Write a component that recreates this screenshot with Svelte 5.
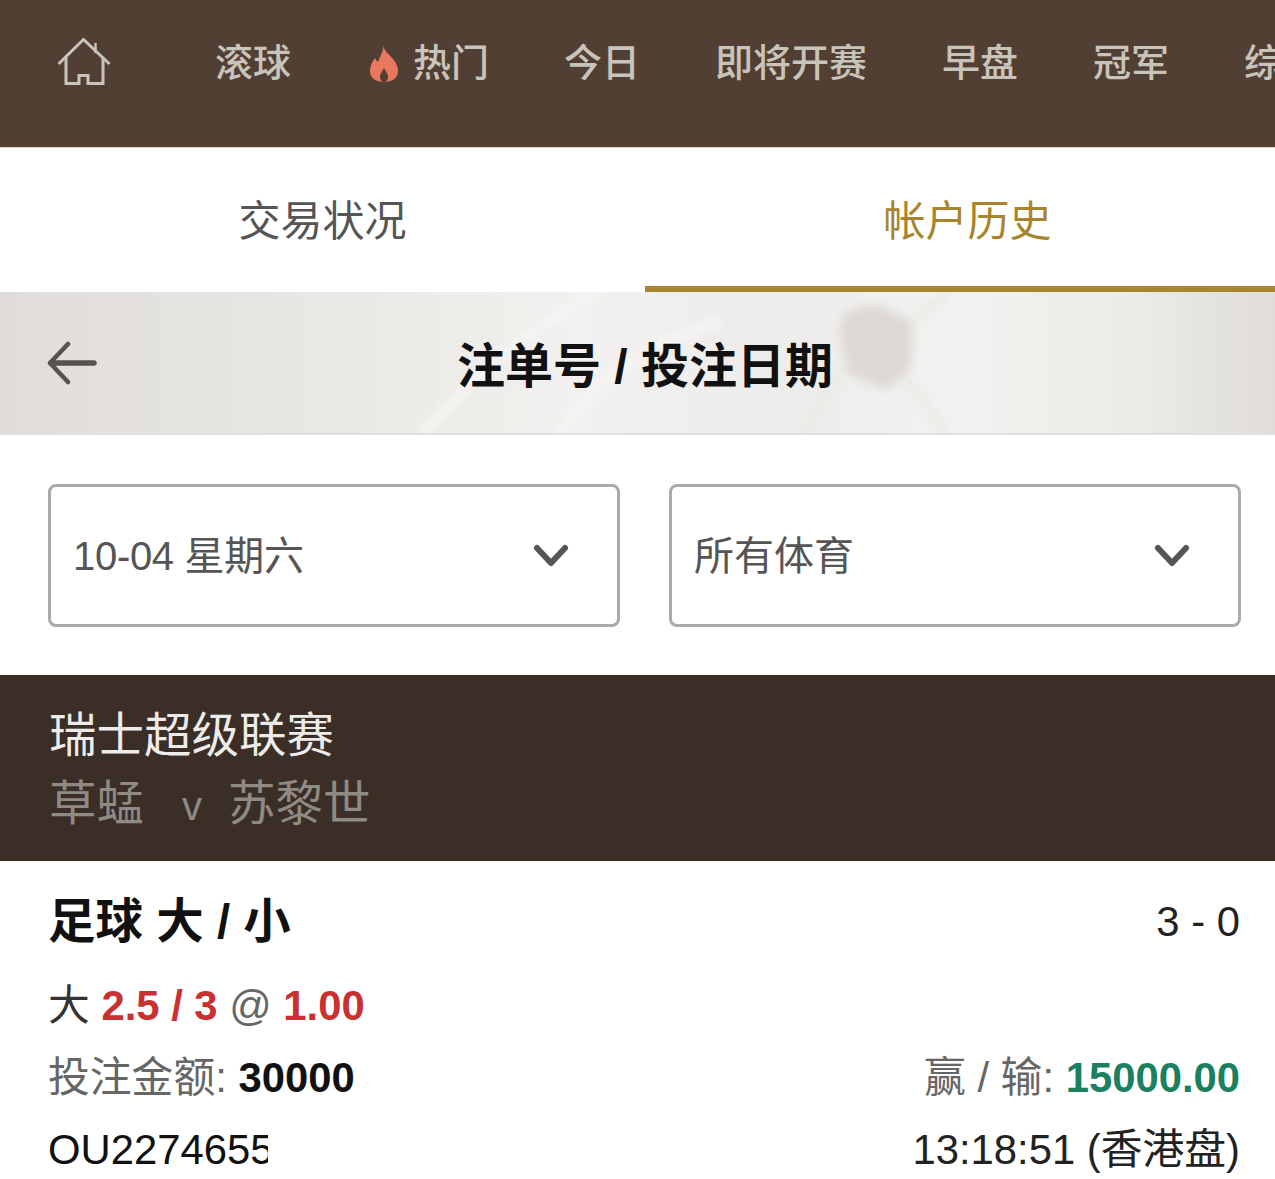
<script>
	const navItems = ['滚球', '热门', '今日', '即将开赛', '早盘', '冠军', '综合'];
</script>

<div class="page">
	<nav class="topnav">
		<svg class="home" viewBox="0 0 54 50" width="54" height="50" fill="none" stroke="#c9c4bb" stroke-width="3">
			<path d="M1.500 26 26.500 1.500 52.500 26" />
			<path d="M38.500 15V5" stroke-width="2.500" />
			<path d="M9 19v26.500h13v-8h9v8h15V19" />
		</svg>
		{#each navItems as item}
			<div class="nav-item">
				{#if item === '热门'}
					<svg class="flame" viewBox="0 0 30 37" width="30" height="37">
						<path fill="#e9785f" d="M14 0c1 6 6 9 10 14 3 4 5 7 5 12 0 7-6 11-14 11S1 33 1 26c0-5 2-9 5-13 1 2 2 3 3 4 2-6 6-11 5-17Z" />
						<path fill="#523f33" d="M15 23c1 3 4 5 4 9 0 3-2 5-4 5s-4-2-4-5c0-4 3-6 4-9Z" />
					</svg>
				{/if}
				{item}
			</div>
		{/each}
	</nav>

	<div class="tabs">
		<div class="tab">交易状况</div>
		<div class="tab active">帐户历史</div>
	</div>

	<header class="banner">
		<svg class="ball" viewBox="0 0 1290 143" width="1290" height="143" fill="none">
			<path d="M845 20l32-8 36 18-2 46-24 22-40-16-8-44Z" fill="#dcd9d5" />
			<path d="M915 26 950 0M905 84l44 59M838 84l-34 59" stroke="#e9e7e4" stroke-width="5" />
			<path d="M420 143C470 90 520 40 600 0M560 143C590 90 650 50 720 30" stroke="#f7f6f4" stroke-width="8" />
		</svg>
		<svg class="back" viewBox="0 0 50 44" width="50" height="44" fill="none" stroke="#58524e" stroke-width="5.500" stroke-linecap="round" stroke-linejoin="round">
			<path d="M21 3 3 22l18 19" stroke-width="4.500" />
			<path d="M4 22h43" />
		</svg>
		<h1>注单号 / 投注日期</h1>
	</header>

	<div class="filters">
		<div class="select">
			<span class="date">10-04 星期六</span>
			<svg viewBox="0 0 36 24" width="36" height="24" fill="none" stroke="#555" stroke-width="6" stroke-linecap="round" stroke-linejoin="round"><path d="M4 4l14 15L32 4" /></svg>
		</div>
		<div class="select">
			<span>所有体育</span>
			<svg viewBox="0 0 36 24" width="36" height="24" fill="none" stroke="#555" stroke-width="6" stroke-linecap="round" stroke-linejoin="round"><path d="M4 4l14 15L32 4" /></svg>
		</div>
	</div>

	<section class="league">
		<div class="league-name">瑞士超级联赛</div>
		<div class="teams">草蜢<span class="vs">v</span>苏黎世</div>
	</section>

	<section class="bet">
		<div class="row first">
			<div class="bet-type">足球 大 / 小</div>
			<div class="score">3 - 0</div>
		</div>
		<div class="row">
			<div>大 <b class="red">2.5 / 3</b> <span class="muted">@</span> <b class="red">1.00</b></div>
		</div>
		<div class="row">
			<div class="muted">投注金额: <b class="dark">30000</b></div>
			<div class="muted">赢 / 输: <b class="green">15000.00</b></div>
		</div>
		<div class="row">
			<div class="ref">OU2274655</div>
			<div class="time">13:18:51 (香港盘)</div>
		</div>
	</section>
</div>

<style>
	:global(body) {
		margin: 0;
		background: #fff;
	}

	.page {
		width: 1275px;
		height: 1179px;
		overflow: hidden;
		font-family: "Liberation Sans", "Noto Sans CJK SC", sans-serif;
	}

	.topnav {
		display: flex;
		align-items: center;
		box-sizing: border-box;
		height: 148px;
		background: #523f33;
		padding: 0 0 29px 57px;
		gap: 75px;
		white-space: nowrap;
		overflow: hidden;
		border-bottom: 1px solid #d8d2c8;
		color: #c9c4bb;
		font-size: 38px;
		font-weight: 500;
	}

	.home {
		flex: none;
		margin-right: 29px;
		margin-top: 8px;
	}

	.nav-item {
		flex: none;
		display: flex;
		align-items: center;
		height: 50px;
	}

	.flame {
		margin: 8px 14px 0 3px;
	}

	.tabs {
		display: flex;
		width: 1290px;
		height: 144px;
	}

	.tab {
		flex: 1;
		display: flex;
		align-items: center;
		justify-content: center;
		box-sizing: border-box;
		border-bottom: 6px solid transparent;
		font-size: 42px;
		color: #555;
	}

	.tab.active {
		color: #a8842c;
		border-bottom-color: #a8842c;
	}

	.banner {
		position: relative;
		display: flex;
		align-items: center;
		justify-content: center;
		box-sizing: border-box;
		width: 1290px;
		height: 143px;
		overflow: hidden;
		background: linear-gradient(90deg, #dfdcd9 0%, #e5e3e0 14%, #ebe9e6 28%, #f3f1ef 45%, #eeecea 60%, #f3f2f0 74%, #ecebe8 88%, #dedbd8 100%);
		border-bottom: 2px solid #e2dfdc;
	}

	.ball {
		position: absolute;
		left: 0;
		top: 0;
		filter: blur(4px);
	}

	.back {
		position: absolute;
		left: 47px;
		top: 49px;
	}

	h1 {
		position: relative;
		margin: 0 0 2px;
		font-size: 48px;
		font-weight: 700;
		color: #111;
	}

	.filters {
		display: flex;
		gap: 49px;
		padding: 49px 34px 48px 48px;
	}

	.select {
		flex: 1;
		display: flex;
		align-items: center;
		justify-content: space-between;
		box-sizing: border-box;
		height: 143px;
		padding: 0 48px 0 22px;
		border: 3px solid #aaa;
		border-radius: 8px;
		font-size: 40px;
		color: #555;
	}

	.select span {
		margin-bottom: 5px;
	}

	.date {
		letter-spacing: -0.300px;
	}

	.league {
		box-sizing: border-box;
		height: 186px;
		padding: 27px 49px 0;
		background: #3a2e27;
		font-size: 47.500px;
		line-height: 68px;
	}

	.league-name {
		color: #eeecea;
	}

	.teams {
		color: #8f8a84;
	}

	.vs {
		margin: 0 26px 0 38px;
		font-size: 40px;
	}

	.bet {
		padding: 0 35px 0 48px;
		font-size: 41.800px;
		color: #333;
	}

	.row {
		display: flex;
		justify-content: space-between;
		align-items: center;
		height: 72px;
	}

	.row.first {
		box-sizing: border-box;
		height: 105px;
		padding-top: 7px;
	}

	.bet-type {
		font-size: 47.500px;
		font-weight: 700;
		color: #111;
	}

	.score {
		margin-top: 10px;
		color: #222;
	}

	.red {
		color: #c93030;
	}

	.muted {
		color: #666;
	}

	.dark {
		color: #111;
	}

	.green {
		color: #1a8060;
	}

	.ref {
		width: 220px;
		margin-top: 7px;
		overflow: hidden;
		white-space: nowrap;
		color: #111;
	}

	.time {
		color: #222;
	}
</style>
